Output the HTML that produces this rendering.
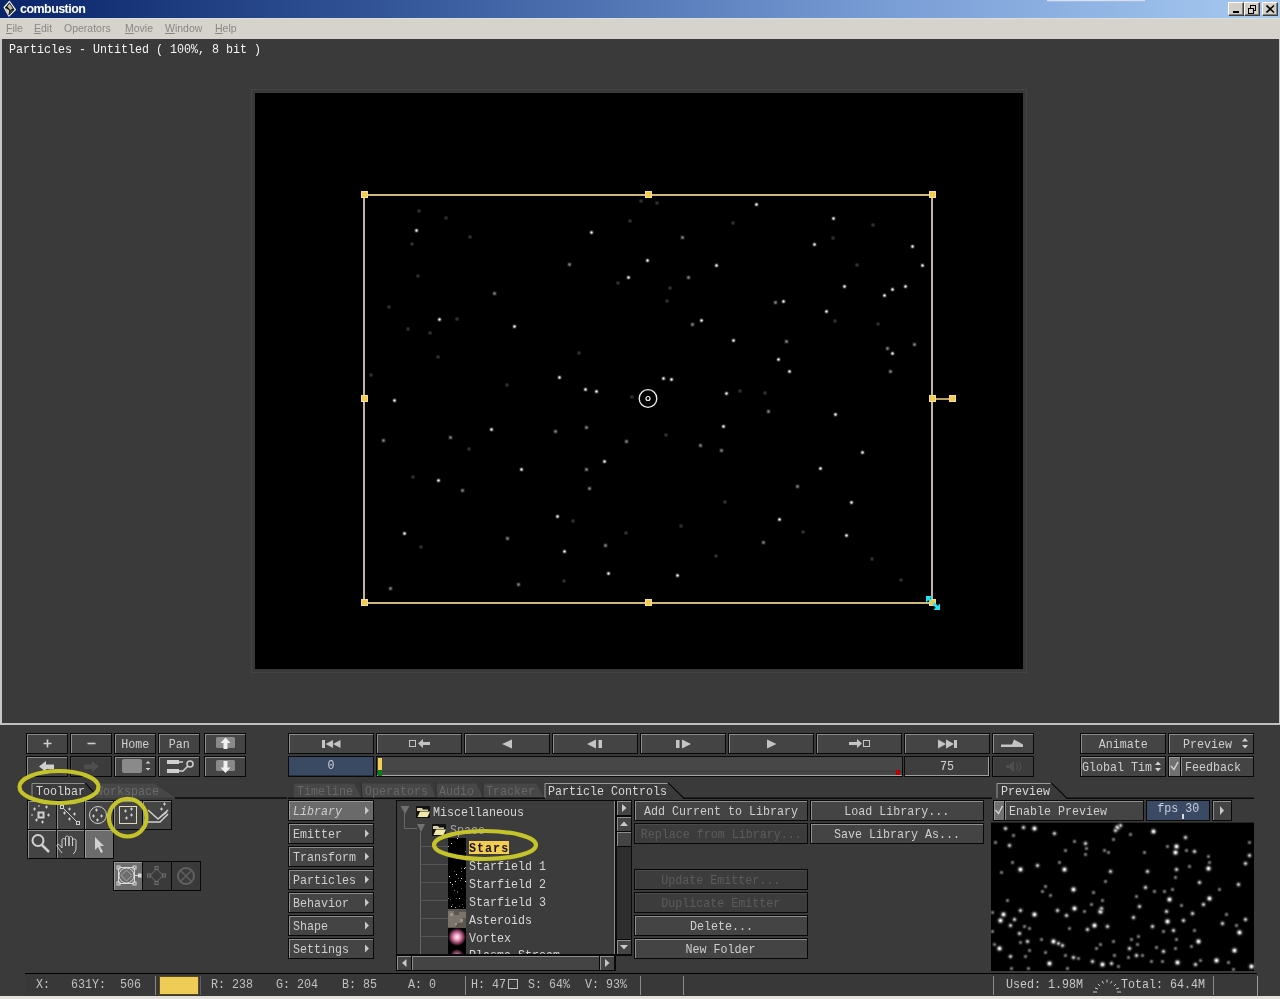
<!DOCTYPE html>
<html><head><meta charset="utf-8">
<style>
*{margin:0;padding:0;box-sizing:border-box}
html,body{width:1280px;height:999px;overflow:hidden;background:#3a3a3a;position:relative;font-family:"Liberation Mono",monospace;-webkit-font-smoothing:antialiased}
body{will-change:transform}
.a{position:absolute}
#title{left:0;top:0;width:1280px;height:18px;background:linear-gradient(to right,#0a246a 0%,#3a5ea0 35%,#7a9ed6 70%,#a6caf0 100%)}
#title .ttl{left:20px;top:1px;font:bold 12.5px/17px "Liberation Sans",sans-serif;color:#fff;letter-spacing:-0.55px}
.wb{top:2px;width:16px;height:14px;background:#d4d0c8;border-top:1px solid #fff;border-left:1px solid #fff;border-right:1px solid #404040;border-bottom:1px solid #404040;box-shadow:inset -1px -1px 0 #808080}
#menu{left:0;top:18px;width:1280px;height:21px;background:#d6d2cc;border-top:1px solid #dedede}
#menu span{position:absolute;top:2px;font:10.5px/14px "Liberation Sans",sans-serif;color:#8a8784}
#menu span u{text-decoration:underline}
#vp{left:0;top:39px;width:1280px;height:686px;background:#3a3a3a;border-left:2px solid #c8c8c8;border-right:1px solid #c8c8c8;border-bottom:2px solid #c0c0c0}
#vptitle{left:9px;top:42px;font:13.5px/16px "Liberation Mono",monospace;color:#f4f4f4}
#canvas{left:255px;top:93px;width:768px;height:576px;background:#000;box-shadow:0 0 0 3px #393939,0 0 0 4px #444}
.bb{background:#d8b870}
.hd{width:7px;height:7px;background:#f2cc55;box-shadow:inset 0 0 0 1px #f6e08a}
i{position:absolute;display:block}
.sb{width:5px;height:5px;margin:-1px 0 0 -1px;background:radial-gradient(circle,#f0f0f0 0,#cfcfcf 22%,rgba(140,140,140,.5) 45%,rgba(80,80,80,.2) 70%,transparent 100%)}
.sm{width:5px;height:5px;margin:-1px 0 0 -1px;background:radial-gradient(circle,#8a8a8a 0,#5a5a5a 30%,rgba(60,60,60,.4) 60%,transparent 100%)}
.sd{width:4px;height:4px;margin:-1px 0 0 -1px;background:radial-gradient(circle,#3c3c3c 0,#262626 40%,transparent 100%)}
.pb{width:9px;height:9px;background:radial-gradient(circle,#fff 0,#e8e8e8 12%,#8a8a8a 28%,rgba(90,90,90,.35) 50%,transparent 75%)}
.pm{width:7px;height:7px;background:radial-gradient(circle,#d0d0d0 0,#888 22%,rgba(80,80,80,.4) 50%,transparent 80%)}
.ps{width:5px;height:5px;background:radial-gradient(circle,#7a7a7a 0,#4a4a4a 35%,rgba(60,60,60,.3) 65%,transparent 100%)}
/* buttons */
.btn{position:absolute;background:#424242;border:1px solid #0c0c0c;box-shadow:inset 1px 1px 0 #8a8a8a, inset -1px -1px 0 #2e2e2e;color:#d6d6d6;font:12.5px/19px "Liberation Mono",monospace;letter-spacing:-0.5px;text-align:center;white-space:nowrap;overflow:hidden}
.btn.dis{color:#5e5e5e}
.sunk{position:absolute;background:#3c3c3c;border-top:1px solid #1a1a1a;border-left:1px solid #1a1a1a;border-bottom:1px solid #a0a0a0;border-right:1px solid #a0a0a0;color:#d6d6d6;font:12.5px/17px "Liberation Mono",monospace;text-align:center}
.tab{position:absolute;height:15px;font:12.5px/15px "Liberation Mono",monospace;letter-spacing:-0.5px;color:#6e6e6e}
.ell{position:absolute;border:4px solid #b9b92a;border-radius:50%}
.txt{position:absolute;font:12.5px/16px "Liberation Mono",monospace;letter-spacing:-0.5px;color:#d8d8d8;white-space:nowrap}

.b{position:absolute;display:flex;justify-content:center;align-items:flex-start;background:#444;border:1px solid #080808;box-shadow:inset 1px 1px 0 #8e8e8e;color:#cecece;font:13.5px/21px "Liberation Mono",monospace;text-align:center;white-space:nowrap;overflow:hidden}
.b.d{background:#3c3c3c;box-shadow:inset 1px 1px 0 #4a4a4a;color:#5c5c5c}
.b.on{background:#6a6a6a;box-shadow:inset 1px 1px 0 #9a9a9a}
.b svg{position:absolute;left:0;top:0}
.tb{position:absolute;font:13.5px/15px "Liberation Mono",monospace;white-space:nowrap}
.t{display:inline-block;transform:scaleX(.864)}
.tl{display:inline-block;transform:scaleX(.864);transform-origin:0 50%}
.ln{position:absolute;background:#0a0a0a}
</style></head><body>
<!-- title bar -->
<div id="title" class="a">
  <svg class="a" style="left:0;top:0" width="20" height="18" viewBox="0 0 20 18"><path d="M9.5 0.6 L16.2 9.8 L8.8 17 L3.4 7.2 Z" fill="#fff"/><path d="M9.5 2.2 L14.6 9.8 L8.8 15.5 L5 7.5 Z" fill="#0a0a0a"/><path d="M9.5 3.5 L12.8 8.5 L10.2 10 L7.2 6.6 Z" fill="#b8b4ac"/><path d="M6 8.2 L9.2 10.2 L8.8 14.6 L6.4 12.2 Z" fill="#d8d0bc"/><path d="M10.4 10.6 L13.6 10 L9.6 14.2 Z" fill="#3c5a3a"/></svg>
  <div class="a ttl">combustion</div>
  <div class="a" style="left:1047px;top:0;width:98px;height:1px;background:#d8e0ff"></div><div class="a" style="left:1047px;top:1px;width:98px;height:1px;background:#a8b8e8"></div>
  <div class="a wb" style="left:1228px"><div class="a" style="left:4px;top:8px;width:6px;height:2px;background:#000"></div></div>
  <div class="a wb" style="left:1244px"><svg class="a" style="left:2px;top:1px" width="10" height="10"><rect x="3.5" y="1.5" width="5" height="5" fill="none" stroke="#000" stroke-width="1"/><rect x="3" y="1" width="6" height="1" fill="#000"/><rect x="1.5" y="4.5" width="5" height="5" fill="#d4d0c8" stroke="#000" stroke-width="1"/><rect x="1" y="4" width="6" height="1" fill="#000"/></svg></div>
  <div class="a wb" style="left:1262px"><svg class="a" style="left:3px;top:2px" width="9" height="8"><path d="M0.5 0.5 L8 7.5 M8 0.5 L0.5 7.5" stroke="#000" stroke-width="1.6"/></svg></div>
</div>
<!-- menu -->
<div id="menu" class="a">
  <span style="left:6px"><u>F</u>ile</span>
  <span style="left:34px"><u>E</u>dit</span>
  <span style="left:64px">Operators</span>
  <span style="left:125px"><u>M</u>ovie</span>
  <span style="left:165px"><u>W</u>indow</span>
  <span style="left:215px"><u>H</u>elp</span>
</div>
<!-- viewport -->
<div id="vp" class="a"></div>
<div id="vptitle" class="a"><span class="tl">Particles - Untitled ( 100%, 8 bit )</span></div>
<div id="canvas" class="a"></div>
<div id="stars"><i class="sb" style="left:415px;top:229px"></i>
<i class="sb" style="left:590px;top:231px"></i>
<i class="sb" style="left:646px;top:259px"></i>
<i class="sb" style="left:627px;top:276px"></i>
<i class="sb" style="left:438px;top:318px"></i>
<i class="sb" style="left:513px;top:325px"></i>
<i class="sb" style="left:558px;top:376px"></i>
<i class="sb" style="left:584px;top:388px"></i>
<i class="sb" style="left:595px;top:390px"></i>
<i class="sb" style="left:755px;top:203px"></i>
<i class="sb" style="left:832px;top:217px"></i>
<i class="sb" style="left:813px;top:243px"></i>
<i class="sb" style="left:911px;top:245px"></i>
<i class="sb" style="left:715px;top:264px"></i>
<i class="sb" style="left:921px;top:264px"></i>
<i class="sb" style="left:843px;top:285px"></i>
<i class="sb" style="left:891px;top:288px"></i>
<i class="sb" style="left:904px;top:285px"></i>
<i class="sb" style="left:883px;top:294px"></i>
<i class="sb" style="left:782px;top:300px"></i>
<i class="sb" style="left:825px;top:310px"></i>
<i class="sb" style="left:700px;top:319px"></i>
<i class="sb" style="left:732px;top:339px"></i>
<i class="sb" style="left:891px;top:352px"></i>
<i class="sb" style="left:777px;top:358px"></i>
<i class="sb" style="left:788px;top:370px"></i>
<i class="sb" style="left:662px;top:377px"></i>
<i class="sb" style="left:670px;top:378px"></i>
<i class="sb" style="left:725px;top:392px"></i>
<i class="sb" style="left:393px;top:399px"></i>
<i class="sb" style="left:490px;top:428px"></i>
<i class="sb" style="left:520px;top:468px"></i>
<i class="sb" style="left:603px;top:460px"></i>
<i class="sb" style="left:556px;top:515px"></i>
<i class="sb" style="left:403px;top:532px"></i>
<i class="sb" style="left:563px;top:550px"></i>
<i class="sb" style="left:607px;top:572px"></i>
<i class="sb" style="left:437px;top:479px"></i>
<i class="sb" style="left:834px;top:413px"></i>
<i class="sb" style="left:722px;top:425px"></i>
<i class="sb" style="left:861px;top:451px"></i>
<i class="sb" style="left:819px;top:467px"></i>
<i class="sb" style="left:850px;top:501px"></i>
<i class="sb" style="left:778px;top:518px"></i>
<i class="sb" style="left:845px;top:534px"></i>
<i class="sb" style="left:676px;top:574px"></i>
<i class="sm" style="left:568px;top:263px"></i>
<i class="sm" style="left:493px;top:292px"></i>
<i class="sm" style="left:382px;top:439px"></i>
<i class="sm" style="left:449px;top:436px"></i>
<i class="sm" style="left:585px;top:426px"></i>
<i class="sm" style="left:554px;top:430px"></i>
<i class="sm" style="left:625px;top:440px"></i>
<i class="sm" style="left:585px;top:468px"></i>
<i class="sm" style="left:588px;top:487px"></i>
<i class="sm" style="left:461px;top:489px"></i>
<i class="sm" style="left:506px;top:537px"></i>
<i class="sm" style="left:604px;top:544px"></i>
<i class="sm" style="left:517px;top:583px"></i>
<i class="sm" style="left:389px;top:587px"></i>
<i class="sm" style="left:767px;top:410px"></i>
<i class="sm" style="left:699px;top:444px"></i>
<i class="sm" style="left:720px;top:449px"></i>
<i class="sm" style="left:796px;top:485px"></i>
<i class="sm" style="left:762px;top:541px"></i>
<i class="sm" style="left:681px;top:236px"></i>
<i class="sm" style="left:687px;top:276px"></i>
<i class="sm" style="left:785px;top:340px"></i>
<i class="sm" style="left:886px;top:347px"></i>
<i class="sm" style="left:774px;top:301px"></i>
<i class="sm" style="left:691px;top:323px"></i>
<i class="sm" style="left:889px;top:370px"></i>
<i class="sm" style="left:913px;top:343px"></i>
<i class="sd" style="left:388px;top:306px"></i>
<i class="sd" style="left:417px;top:275px"></i>
<i class="sd" style="left:411px;top:243px"></i>
<i class="sd" style="left:418px;top:210px"></i>
<i class="sd" style="left:445px;top:217px"></i>
<i class="sd" style="left:469px;top:236px"></i>
<i class="sd" style="left:629px;top:220px"></i>
<i class="sd" style="left:640px;top:200px"></i>
<i class="sd" style="left:370px;top:374px"></i>
<i class="sd" style="left:437px;top:356px"></i>
<i class="sd" style="left:456px;top:318px"></i>
<i class="sd" style="left:429px;top:332px"></i>
<i class="sd" style="left:407px;top:328px"></i>
<i class="sd" style="left:578px;top:352px"></i>
<i class="sd" style="left:506px;top:384px"></i>
<i class="sd" style="left:631px;top:396px"></i>
<i class="sd" style="left:617px;top:282px"></i>
<i class="sd" style="left:669px;top:287px"></i>
<i class="sd" style="left:666px;top:300px"></i>
<i class="sd" style="left:656px;top:202px"></i>
<i class="sd" style="left:732px;top:222px"></i>
<i class="sd" style="left:877px;top:323px"></i>
<i class="sd" style="left:834px;top:320px"></i>
<i class="sd" style="left:764px;top:392px"></i>
<i class="sd" style="left:739px;top:390px"></i>
<i class="sd" style="left:832px;top:237px"></i>
<i class="sd" style="left:872px;top:224px"></i>
<i class="sd" style="left:856px;top:264px"></i>
<i class="sd" style="left:412px;top:476px"></i>
<i class="sd" style="left:468px;top:448px"></i>
<i class="sd" style="left:420px;top:546px"></i>
<i class="sd" style="left:572px;top:520px"></i>
<i class="sd" style="left:625px;top:532px"></i>
<i class="sd" style="left:563px;top:580px"></i>
<i class="sd" style="left:802px;top:531px"></i>
<i class="sd" style="left:680px;top:525px"></i>
<i class="sd" style="left:871px;top:558px"></i>
<i class="sd" style="left:900px;top:579px"></i>
<i class="sd" style="left:724px;top:501px"></i>
<i class="sd" style="left:665px;top:434px"></i>
<i class="sd" style="left:715px;top:555px"></i></div>
<!-- BBOX -->
<div class="a bb" style="left:363px;top:194px;width:570px;height:2px;background:#cdb880"></div>
<div class="a bb" style="left:363px;top:602px;width:570px;height:2px;background:#cdb880"></div>
<div class="a bb" style="left:363px;top:194px;width:2px;height:410px;background:#c4b496"></div>
<div class="a bb" style="left:931px;top:194px;width:2px;height:410px;background:#c4b496"></div>
<div class="a" style="left:933px;top:398px;width:18px;height:2px;background:#b8a060"></div>
<div class="a hd" style="left:361px;top:191px"></div>
<div class="a hd" style="left:645px;top:191px"></div>
<div class="a hd" style="left:929px;top:191px"></div>
<div class="a hd" style="left:361px;top:395px"></div>
<div class="a hd" style="left:929px;top:395px"></div>
<div class="a hd" style="left:949px;top:395px"></div>
<div class="a hd" style="left:361px;top:599px"></div>
<div class="a hd" style="left:645px;top:599px"></div>
<div class="a hd" style="left:929px;top:599px"></div>
<svg class="a" style="left:924px;top:594px" width="18" height="18" viewBox="0 0 18 18"><path d="M2 2 L8.5 2 L6.3 4.2 L13.8 11.7 L16 9.5 L16 16 L9.5 16 L11.7 13.8 L4.2 6.3 L2 8.5 Z" fill="#20e4f0"/><rect x="6" y="6" width="4" height="4" fill="#e8cc60" opacity="0.85"/></svg>
<svg class="a" style="left:637px;top:388px" width="22" height="22" viewBox="0 0 22 22"><circle cx="11" cy="10.5" r="8.8" fill="none" stroke="#f0f0f0" stroke-width="1.3"/><circle cx="11" cy="10.5" r="2" fill="none" stroke="#f0f0f0" stroke-width="1.2"/></svg>
<!-- BOTTOM -->
<div id="bottom"></div>
<!-- left toolbar buttons -->
<div class="b" style="left:26px;top:733px;width:42px;height:21px"><svg width="40" height="19"><path d="M16.5 9.5 h8 M20.5 5.5 v8" stroke="#cfcfcf" stroke-width="1.6"/></svg></div>
<div class="b" style="left:70px;top:733px;width:42px;height:21px"><svg width="40" height="19"><path d="M16.5 9.5 h8" stroke="#cfcfcf" stroke-width="1.6"/></svg></div>
<div class="b" style="left:114px;top:733px;width:42px;height:21px"><span class="t">Home</span></div>
<div class="b" style="left:158px;top:733px;width:42px;height:21px"><span class="t">Pan</span></div>
<div class="b" style="left:204px;top:733px;width:42px;height:21px"><svg width="40" height="19"><rect x="11" y="3" width="19" height="11" rx="1.5" fill="#8a8a8a"/><path d="M20.5 3.5 L15.5 9 H18.5 V15 H22.5 V9 H25.5 Z" fill="#f0f0f0"/></svg></div>
<div class="b" style="left:26px;top:756px;width:42px;height:21px"><svg width="40" height="19"><path d="M12 9.5 L19 4 V7.5 H27 V12 H19 V15 Z" fill="#cfcfcf"/></svg></div>
<div class="b d" style="left:70px;top:756px;width:42px;height:21px"><svg width="40" height="19"><path d="M28 9.5 L21 4 V7.5 H13 V12 H21 V15 Z" fill="#4e4e4e"/></svg></div>
<div class="b" style="left:114px;top:756px;width:42px;height:21px"><svg width="40" height="19"><rect x="7" y="2" width="20" height="14" rx="2" fill="#8a8a8a"/><path d="M30.5 6.5 L33 4 L35.5 6.5 Z M30.5 11 L33 13.5 L35.5 11 Z" fill="#d0d0d0"/></svg></div>
<div class="b" style="left:158px;top:756px;width:42px;height:21px"><svg width="40" height="19"><rect x="8" y="3" width="12" height="4" fill="#d0d0d0"/><rect x="8" y="12" width="12" height="4" fill="#d0d0d0"/><path d="M20 5 h4 M20 14 h4 L29 9" stroke="#d0d0d0" fill="none" stroke-width="1.5"/><circle cx="31" cy="7" r="3" fill="none" stroke="#d0d0d0" stroke-width="1.5"/></svg></div>
<div class="b" style="left:204px;top:756px;width:42px;height:21px"><svg width="40" height="19"><rect x="11" y="3" width="19" height="11" rx="1.5" fill="#8a8a8a"/><path d="M20.5 16 L15.5 10.5 H18.5 V4 H22.5 V10.5 H25.5 Z" fill="#f0f0f0"/></svg></div>

<!-- toolbar tabs -->
<svg class="a" style="left:28px;top:782px" width="262" height="18"><path d="M4 16 V1.5 H57 L70 15.5" fill="#3a3a3a" stroke="#8e8e8e" stroke-width="1"/><path d="M57 1 L71 16" stroke="#0a0a0a" stroke-width="1.5"/><path d="M68 16 V1.5 H126 L147 15.5 Z" fill="#474747"/><path d="M147 16 H259" stroke="#0a0a0a" stroke-width="1.5"/></svg>
<div class="tb" style="left:36px;top:784px;color:#d8d8d8"><span class="tl">Toolbar</span></div>
<div class="tb" style="left:96px;top:784px;color:#6a6a6a"><span class="tl">Workspace</span></div>


<!-- transport row1 -->
<div class="b" style="left:288px;top:733px;width:86px;height:21px"><svg width="84" height="19"><rect x="33" y="6" width="3" height="8" fill="#c4c4c4"/><path d="M36.5 10 L44 6 V14 Z M44 10 L51.5 6 V14 Z" fill="#c4c4c4"/></svg></div>
<div class="b" style="left:376px;top:733px;width:86px;height:21px"><svg width="84" height="19"><rect x="32.5" y="6.5" width="6" height="6" fill="none" stroke="#c4c4c4"/><path d="M41 9.5 L46 5 V8 H53 V11 H46 V14 Z" fill="#c4c4c4"/></svg></div>
<div class="b" style="left:464px;top:733px;width:86px;height:21px"><svg width="84" height="19"><path d="M37 10 L47 5.5 V14.5 Z" fill="#c4c4c4"/></svg></div>
<div class="b" style="left:552px;top:733px;width:86px;height:21px"><svg width="84" height="19"><path d="M34 10 L43 5.5 V14.5 Z" fill="#c4c4c4"/><rect x="45.5" y="6" width="3.5" height="8" fill="#c4c4c4"/></svg></div>
<div class="b" style="left:640px;top:733px;width:86px;height:21px"><svg width="84" height="19"><rect x="35" y="6" width="3.5" height="8" fill="#c4c4c4"/><path d="M41 5.5 L50 10 L41 14.5 Z" fill="#c4c4c4"/></svg></div>
<div class="b" style="left:728px;top:733px;width:86px;height:21px"><svg width="84" height="19"><path d="M38 5.5 L47.5 10 L38 14.5 Z" fill="#c4c4c4"/></svg></div>
<div class="b" style="left:816px;top:733px;width:86px;height:21px"><svg width="84" height="19"><path d="M45 9.5 L40 5 V8 H32 V11 H40 V14 Z" fill="#c4c4c4"/><rect x="46.5" y="6.5" width="6" height="6" fill="none" stroke="#c4c4c4"/></svg></div>
<div class="b" style="left:904px;top:733px;width:86px;height:21px"><svg width="84" height="19"><path d="M33 5.5 L41 10 L33 14.5 Z M41 5.5 L49 10 L41 14.5 Z" fill="#c4c4c4"/><rect x="49" y="6" width="3" height="8" fill="#c4c4c4"/></svg></div>
<div class="b" style="left:992px;top:733px;width:42px;height:21px"><svg width="40" height="19"><path d="M8 10.5 H30 V13 H8 Z M19 10.5 L21 5.5 L30 10.5 Z" fill="#c4c4c4"/></svg></div>
<!-- transport row2 -->
<div class="a" style="left:288px;top:756px;width:86px;height:21px;background:#0a0a0a"></div>
<div class="a" style="left:289px;top:757px;width:84px;height:19px;background:#3a4a62;box-shadow:inset 0 -1px 0 #24303f"></div>
<div class="tb" style="left:288px;top:757px;width:86px;text-align:center;color:#c8d0dc;line-height:17px"><span class="t">0</span></div>
<div class="a" style="left:376px;top:756px;width:527px;height:21px;background:#0a0a0a"></div>
<div class="a" style="left:377px;top:757px;width:525px;height:19px;background:#474747;border-bottom:1px solid #a8a8a8"></div>
<div class="a" style="left:377px;top:771px;width:525px;height:1px;background:#3c3c3c"></div>
<div class="a" style="left:378px;top:758px;width:4px;height:12px;background:#f4d050"></div>
<div class="a" style="left:378px;top:770px;width:4px;height:6px;background:#0e7a1e"></div>
<div class="a" style="left:896px;top:770px;width:4px;height:5px;background:#c00000"></div>
<div class="a" style="left:904px;top:756px;width:86px;height:21px;background:#3e3e3e;border:1px solid #0a0a0a;box-shadow:inset -1px -1px 0 #a0a0a0"></div>
<div class="tb" style="left:904px;top:759px;width:86px;text-align:center;color:#d0d0d0"><span class="t">75</span></div>
<div class="b d" style="left:992px;top:756px;width:42px;height:21px"><svg width="40" height="19"><path d="M13 8 H16 L21 4 V15 L16 11 H13 Z" fill="#4e4e4e"/><path d="M23 6 Q26 9.5 23 13 M25.5 4.5 Q30 9.5 25.5 14.5" stroke="#4e4e4e" fill="none" stroke-width="1.3"/></svg></div>
<!-- right group -->
<div class="b" style="left:1080px;top:733px;width:86px;height:21px"><span class="t">Animate</span></div>
<div class="b" style="left:1168px;top:733px;width:86px;height:21px;text-align:left;justify-content:flex-start;padding-left:14px"><span class="tl">Preview</span><svg width="84" height="19"><path d="M73 7.5 L76 4 L79 7.5 Z M73 11 L76 14.5 L79 11 Z" fill="#d0d0d0"/></svg></div>
<div class="b" style="left:1080px;top:756px;width:86px;height:21px;text-align:left;justify-content:flex-start;padding-left:1px"><span class="tl">Global Time</span><div class="a" style="left:71px;top:1px;width:13px;height:18px;background:#444"></div><svg width="84" height="19"><path d="M74 8 L77 4.5 L80 8 Z M74 11 L77 14.5 L80 11 Z" fill="#d0d0d0"/></svg></div>
<div class="b" style="left:1168px;top:756px;width:13px;height:21px;background:#707070;box-shadow:inset 1px 1px 0 #9a9a9a"><svg width="11" height="19"><path d="M2 9 L5 12.5 L9 5" stroke="#d0d0d0" fill="none" stroke-width="1.5"/></svg></div>
<div class="b" style="left:1180px;top:756px;width:74px;height:21px;text-align:left;justify-content:flex-start;padding-left:4px"><span class="tl">Feedback</span></div>

<!-- panel tabs -->
<svg class="a" style="left:286px;top:782px" width="710" height="18">
 <path d="M8 16 V1.5 H68 L75 15.5 Z" fill="#474747"/>
 <path d="M76 16 V1.5 H144 L150 15.5 Z" fill="#474747"/>
 <path d="M150 16 V1.5 H190 L197 15.5 Z" fill="#474747"/>
 <path d="M197 16 V1.5 H250 L258 15.5 Z" fill="#474747"/>
 <path d="M75 1 L76 16 M150 1 V16 M197 1 V16" stroke="#2c2c2c" stroke-width="1"/>
 <path d="M259 16 V1.5 H382 L397 16" fill="#3a3a3a" stroke="#9a9a9a" stroke-width="1"/>
 <path d="M382 1 L397.5 16" stroke="#0a0a0a" stroke-width="1.5"/>
 <path d="M2 16.3 H259 M397 16.3 H706" stroke="#0a0a0a" stroke-width="1.5"/>
</svg>
<div class="tb" style="left:297px;top:784px;color:#676767"><span class="tl">Timeline</span></div>
<div class="tb" style="left:365px;top:784px;color:#676767"><span class="tl">Operators</span></div>
<div class="tb" style="left:439px;top:784px;color:#676767"><span class="tl">Audio</span></div>
<div class="tb" style="left:486px;top:784px;color:#676767"><span class="tl">Tracker</span></div>
<div class="tb" style="left:548px;top:784px;color:#d8d8d8"><span class="tl">Particle Controls</span></div>
<svg class="a" style="left:995px;top:782px" width="262" height="18">
 <path d="M2 16 V1.5 H56 L71 16" fill="#3a3a3a" stroke="#9a9a9a" stroke-width="1"/>
 <path d="M56 1 L71.5 16" stroke="#0a0a0a" stroke-width="1.5"/>
 <path d="M71 16.3 H259" stroke="#0a0a0a" stroke-width="1.5"/>
</svg>
<div class="tb" style="left:1001px;top:784px;color:#d8d8d8"><span class="tl">Preview</span></div>
<!-- particle controls left -->
<div class="b on" style="left:288px;top:800px;width:86px;height:21px;text-align:left;justify-content:flex-start;padding-left:4px;font-style:italic"><span class="tl">Library</span><svg width="84" height="19" style="left:0;top:0"><path d="M76 5.5 L80 9.5 L76 13.5 Z" fill="#c8c8c8"/></svg></div>
<div class="b" style="left:288px;top:823px;width:86px;height:21px;text-align:left;justify-content:flex-start;padding-left:4px"><span class="tl">Emitter</span><svg width="84" height="19" style="left:0;top:0"><path d="M76 5.5 L80 9.5 L76 13.5 Z" fill="#c8c8c8"/></svg></div>
<div class="b" style="left:288px;top:846px;width:86px;height:21px;text-align:left;justify-content:flex-start;padding-left:4px"><span class="tl">Transform</span><svg width="84" height="19" style="left:0;top:0"><path d="M76 5.5 L80 9.5 L76 13.5 Z" fill="#c8c8c8"/></svg></div>
<div class="b" style="left:288px;top:869px;width:86px;height:21px;text-align:left;justify-content:flex-start;padding-left:4px"><span class="tl">Particles</span><svg width="84" height="19" style="left:0;top:0"><path d="M76 5.5 L80 9.5 L76 13.5 Z" fill="#c8c8c8"/></svg></div>
<div class="b" style="left:288px;top:892px;width:86px;height:21px;text-align:left;justify-content:flex-start;padding-left:4px"><span class="tl">Behavior</span><svg width="84" height="19" style="left:0;top:0"><path d="M76 5.5 L80 9.5 L76 13.5 Z" fill="#c8c8c8"/></svg></div>
<div class="b" style="left:288px;top:915px;width:86px;height:21px;text-align:left;justify-content:flex-start;padding-left:4px"><span class="tl">Shape</span><svg width="84" height="19" style="left:0;top:0"><path d="M76 5.5 L80 9.5 L76 13.5 Z" fill="#c8c8c8"/></svg></div>
<div class="b" style="left:288px;top:938px;width:86px;height:21px;text-align:left;justify-content:flex-start;padding-left:4px"><span class="tl">Settings</span><svg width="84" height="19" style="left:0;top:0"><path d="M76 5.5 L80 9.5 L76 13.5 Z" fill="#c8c8c8"/></svg></div>
<!-- tree -->
<div class="a" style="left:396px;top:800px;width:236px;height:156px;background:#0a0a0a"></div>
<div class="a" style="left:397px;top:801px;width:218px;height:153px;background:#3c3c3c;border-right:1px solid #8c8c8c"></div>
<svg class="a" style="left:397px;top:801px" width="218" height="153">
 <path d="M7.5 12 V27.5 H20 M23.5 31 V153" stroke="#666" stroke-width="1" fill="none"/>
 <path d="M24 45.5 H51 M24 63.5 H51 M24 81.5 H51 M24 99.5 H51 M24 117.5 H51 M24 135.5 H51" stroke="#555" stroke-width="1"/>
 <path d="M3.5 5 H12.5 L8 13 Z" fill="#707070"/>
 <path d="M20 23 H28 L24 31 Z" fill="#707070"/>
 <g transform="translate(-1 1)">
  <rect x="20" y="4" width="14" height="12" fill="#111"/><path d="M21 6 H26 L27 7.5 H32 V9 H21 Z" fill="#d8d0a0"/><path d="M21.5 15 L24 9.5 H34 L31.5 15 Z" fill="#f0e8a8"/>
 </g>
 <g transform="translate(15 19)">
  <rect x="20" y="4" width="14" height="12" fill="#111"/><path d="M21 6 H26 L27 7.5 H32 V9 H21 Z" fill="#d8d0a0"/><path d="M21.5 15 L24 9.5 H34 L31.5 15 Z" fill="#f0e8a8"/>
 </g>
 <rect x="51" y="37" width="18" height="116" fill="#000"/>
 <g fill="#ccc"><rect x="58" y="106" width="1" height="1" fill="#aaa"/><rect x="62" y="97" width="1" height="1" fill="#eee"/><rect x="51" y="97" width="1" height="1" fill="#777"/><rect x="68" y="66" width="1" height="1" fill="#aaa"/><rect x="66" y="106" width="1" height="1" fill="#555"/><rect x="63" y="56" width="1" height="1" fill="#aaa"/><rect x="55" y="103" width="1" height="1" fill="#555"/><rect x="51" y="45" width="1" height="1" fill="#aaa"/><rect x="52" y="75" width="1" height="1" fill="#eee"/><rect x="59" y="97" width="1" height="1" fill="#555"/><rect x="64" y="87" width="1" height="1" fill="#555"/><rect x="55" y="83" width="1" height="1" fill="#eee"/><rect x="52" y="54" width="1" height="1" fill="#555"/><rect x="57" y="70" width="1" height="1" fill="#555"/><rect x="60" y="90" width="1" height="1" fill="#555"/><rect x="62" y="105" width="1" height="1" fill="#555"/><rect x="58" y="80" width="1" height="1" fill="#eee"/><rect x="59" y="57" width="1" height="1" fill="#777"/><rect x="68" y="50" width="1" height="1" fill="#aaa"/><rect x="59" y="73" width="1" height="1" fill="#eee"/><rect x="53" y="98" width="1" height="1" fill="#555"/><rect x="53" y="81" width="1" height="1" fill="#eee"/><rect x="64" y="56" width="1" height="1" fill="#eee"/><rect x="60" y="91" width="1" height="1" fill="#555"/><rect x="54" y="42" width="1" height="1" fill="#eee"/><rect x="63" y="79" width="1" height="1" fill="#777"/><rect x="67" y="67" width="1" height="1" fill="#eee"/><rect x="60" y="37" width="1" height="1" fill="#eee"/><rect x="54" y="105" width="1" height="1" fill="#eee"/><rect x="57" y="89" width="1" height="1" fill="#777"/><rect x="59" y="56" width="1" height="1" fill="#eee"/><rect x="61" y="77" width="1" height="1" fill="#777"/><rect x="55" y="85" width="1" height="1" fill="#555"/><rect x="65" y="103" width="1" height="1" fill="#555"/><rect x="68" y="50" width="1" height="1" fill="#777"/><rect x="64" y="67" width="1" height="1" fill="#777"/><rect x="64" y="70" width="1" height="1" fill="#777"/><rect x="68" y="80" width="1" height="1" fill="#eee"/><rect x="64" y="77" width="1" height="1" fill="#eee"/><rect x="63" y="54" width="1" height="1" fill="#eee"/></g>
 <rect x="51" y="108" width="18" height="19" fill="#5c5650"/>
 <path d="M51 110 h6 v4 h5 v-3 h7 v6 h-4 v5 h-6 v4 h-8 Z" fill="#7a746c"/>
 <path d="M53 112 h3 v3 h-3 Z M63 118 h3 v3 h-3 Z M58 122 h2 v2 h-2Z" fill="#9a948a"/>
 <defs><radialGradient id="vg"><stop offset="0" stop-color="#fff4fa"/><stop offset="0.3" stop-color="#f0a8c8"/><stop offset="0.65" stop-color="#a04870"/><stop offset="1" stop-color="#000"/></radialGradient></defs><circle cx="60" cy="136" r="9" fill="url(#vg)"/><circle cx="60" cy="155" r="7" fill="url(#vg)" opacity="0.7"/>
</svg>
<div class="tb" style="left:433px;top:805px;color:#d6d6d6;line-height:16px"><span class="tl">Miscellaneous</span></div>
<div class="tb" style="left:450px;top:823px;color:#a4a4a4;line-height:16px"><span class="tl">Space</span></div>
<div class="a" style="left:469px;top:841px;width:40px;height:13px;background:#f2cc55"></div>
<div class="tb" style="left:469px;top:841px;color:#1a1408;font-weight:bold;line-height:16px;letter-spacing:1.2px"><span class="tl">Stars</span></div>
<div class="tb" style="left:469px;top:859px;color:#d6d6d6;line-height:16px"><span class="tl">Starfield 1</span></div>
<div class="tb" style="left:469px;top:877px;color:#d6d6d6;line-height:16px"><span class="tl">Starfield 2</span></div>
<div class="tb" style="left:469px;top:895px;color:#d6d6d6;line-height:16px"><span class="tl">Starfield 3</span></div>
<div class="tb" style="left:469px;top:913px;color:#d6d6d6;line-height:16px"><span class="tl">Asteroids</span></div>
<div class="tb" style="left:469px;top:931px;color:#d6d6d6;line-height:16px"><span class="tl">Vortex</span></div>
<div class="a" style="left:397px;top:947px;width:217px;height:7px;overflow:hidden"><div class="tb" style="left:72px;top:1px;color:#d6d6d6;line-height:16px"><span class="tl">Plasma Stream</span></div></div>
<!-- v scrollbar -->
<div class="a" style="left:617px;top:846px;width:14px;height:94px;background:#2e2e2e"></div>
<div class="b" style="left:616px;top:800px;width:16px;height:16px"><svg width="14" height="14"><path d="M5 3 L9.5 7 L5 11 Z" fill="#c8c8c8"/></svg></div>
<div class="b" style="left:616px;top:816px;width:16px;height:16px"><svg width="14" height="14"><path d="M3 9 L7 4.5 L11 9 Z" fill="#c8c8c8"/></svg></div>
<div class="b" style="left:616px;top:831px;width:16px;height:16px"></div>
<div class="b" style="left:616px;top:939px;width:16px;height:16px"><svg width="14" height="14"><path d="M3 5 L7 9.5 L11 5 Z" fill="#c8c8c8"/></svg></div>
<!-- h scrollbar -->
<div class="a" style="left:396px;top:955px;width:220px;height:16px;background:#0a0a0a"></div>
<div class="a" style="left:412px;top:956px;width:188px;height:14px;background:#444;box-shadow:inset 1px 1px 0 #8e8e8e"></div>
<div class="b" style="left:396px;top:955px;width:16px;height:16px"><svg width="14" height="14"><path d="M9.5 3 L5 7 L9.5 11 Z" fill="#c8c8c8"/></svg></div>
<div class="b" style="left:599px;top:955px;width:16px;height:16px"><svg width="14" height="14"><path d="M5 3 L9.5 7 L5 11 Z" fill="#c8c8c8"/></svg></div>
<!-- right buttons -->
<div class="b" style="left:634px;top:800px;width:174px;height:21px"><span class="t">Add Current to Library</span></div>
<div class="b" style="left:810px;top:800px;width:174px;height:21px"><span class="t">Load Library...</span></div>
<div class="b d" style="left:634px;top:823px;width:174px;height:21px"><span class="t">Replace from Library...</span></div>
<div class="b" style="left:810px;top:823px;width:174px;height:21px"><span class="t">Save Library As...</span></div>
<div class="b d" style="left:634px;top:869px;width:174px;height:21px"><span class="t">Update Emitter...</span></div>
<div class="b d" style="left:634px;top:892px;width:174px;height:21px"><span class="t">Duplicate Emitter</span></div>
<div class="b" style="left:634px;top:915px;width:174px;height:21px"><span class="t">Delete...</span></div>
<div class="b" style="left:634px;top:938px;width:174px;height:21px"><span class="t">New Folder</span></div>
<!-- preview panel -->
<div class="b on" style="left:993px;top:800px;width:12px;height:21px;background:#707070"><svg width="10" height="19"><path d="M1.5 9 L4.5 12.5 L8.5 5" stroke="#d0d0d0" fill="none" stroke-width="1.5"/></svg></div>
<div class="b" style="left:1004px;top:800px;width:140px;height:21px;text-align:left;justify-content:flex-start;padding-left:4px"><span class="tl">Enable Preview</span></div>
<div class="a" style="left:1146px;top:800px;width:64px;height:21px;background:#0a0a0a"></div>
<div class="a" style="left:1147px;top:801px;width:62px;height:19px;background:#3a4a64"></div>
<div class="tb" style="left:1146px;top:801px;width:64px;text-align:center;color:#c8d0dc"><span class="t">fps 30</span></div>
<div class="a" style="left:1182px;top:814px;width:2px;height:5px;background:#d8d8d8"></div>
<div class="b" style="left:1212px;top:800px;width:20px;height:21px"><svg width="18" height="19"><path d="M7 5 L11 9.5 L7 14 Z" fill="#c8c8c8"/></svg></div>
<div class="a" style="left:991px;top:822px;width:263px;height:149px;background:#000;border-top:1px solid #222"></div>
<div id="pstars"><i class="pb" style="left:1030px;top:824px"></i>
<i class="pm" style="left:1020px;top:824px"></i>
<i class="pm" style="left:1002px;top:825px"></i>
<i class="pm" style="left:1051px;top:830px"></i>
<i class="ps" style="left:1011px;top:833px"></i>
<i class="pb" style="left:1113px;top:823px"></i>
<i class="pm" style="left:1112px;top:827px"></i>
<i class="ps" style="left:1111px;top:837px"></i>
<i class="pm" style="left:1006px;top:842px"></i>
<i class="ps" style="left:993px;top:840px"></i>
<i class="ps" style="left:1072px;top:839px"></i>
<i class="pm" style="left:1082px;top:840px"></i>
<i class="ps" style="left:1084px;top:846px"></i>
<i class="ps" style="left:1063px;top:848px"></i>
<i class="ps" style="left:1102px;top:848px"></i>
<i class="ps" style="left:1106px;top:850px"></i>
<i class="ps" style="left:1083px;top:852px"></i>
<i class="ps" style="left:1010px;top:860px"></i>
<i class="ps" style="left:1057px;top:860px"></i>
<i class="pm" style="left:1034px;top:862px"></i>
<i class="pb" style="left:1016px;top:865px"></i>
<i class="pb" style="left:1060px;top:865px"></i>
<i class="ps" style="left:999px;top:870px"></i>
<i class="pm" style="left:1107px;top:868px"></i>
<i class="ps" style="left:1103px;top:879px"></i>
<i class="ps" style="left:1043px;top:884px"></i>
<i class="pb" style="left:1069px;top:885px"></i>
<i class="ps" style="left:1040px;top:889px"></i>
<i class="ps" style="left:1048px;top:893px"></i>
<i class="ps" style="left:1091px;top:890px"></i>
<i class="ps" style="left:1005px;top:898px"></i>
<i class="ps" style="left:1100px;top:898px"></i>
<i class="ps" style="left:1089px;top:902px"></i>
<i class="pm" style="left:1017px;top:907px"></i>
<i class="pm" style="left:1054px;top:907px"></i>
<i class="pb" style="left:1070px;top:904px"></i>
<i class="pb" style="left:1096px;top:907px"></i>
<i class="pm" style="left:1098px;top:905px"></i>
<i class="pb" style="left:999px;top:910px"></i>
<i class="pb" style="left:1030px;top:910px"></i>
<i class="pm" style="left:1063px;top:912px"></i>
<i class="ps" style="left:1082px;top:909px"></i>
<i class="pb" style="left:996px;top:916px"></i>
<i class="pm" style="left:1011px;top:916px"></i>
<i class="pm" style="left:1007px;top:922px"></i>
<i class="pb" style="left:1090px;top:921px"></i>
<i class="pm" style="left:1104px;top:923px"></i>
<i class="pm" style="left:1084px;top:926px"></i>
<i class="ps" style="left:1067px;top:926px"></i>
<i class="pm" style="left:1016px;top:930px"></i>
<i class="ps" style="left:1027px;top:926px"></i>
<i class="ps" style="left:1022px;top:924px"></i>
<i class="pb" style="left:1049px;top:937px"></i>
<i class="pm" style="left:1055px;top:940px"></i>
<i class="pm" style="left:1059px;top:942px"></i>
<i class="pm" style="left:1024px;top:938px"></i>
<i class="ps" style="left:1039px;top:937px"></i>
<i class="ps" style="left:1018px;top:940px"></i>
<i class="ps" style="left:992px;top:942px"></i>
<i class="pb" style="left:995px;top:944px"></i>
<i class="ps" style="left:1111px;top:939px"></i>
<i class="ps" style="left:1098px;top:942px"></i>
<i class="ps" style="left:1094px;top:946px"></i>
<i class="ps" style="left:1027px;top:948px"></i>
<i class="ps" style="left:1043px;top:950px"></i>
<i class="pm" style="left:1007px;top:953px"></i>
<i class="ps" style="left:1023px;top:954px"></i>
<i class="ps" style="left:1063px;top:953px"></i>
<i class="pm" style="left:1070px;top:954px"></i>
<i class="ps" style="left:1076px;top:956px"></i>
<i class="pm" style="left:1089px;top:958px"></i>
<i class="ps" style="left:1112px;top:953px"></i>
<i class="pb" style="left:1045px;top:959px"></i>
<i class="pb" style="left:1098px;top:960px"></i>
<i class="pm" style="left:1108px;top:960px"></i>
<i class="ps" style="left:1116px;top:964px"></i>
<i class="ps" style="left:1009px;top:966px"></i>
<i class="ps" style="left:1026px;top:966px"></i>
<i class="ps" style="left:1065px;top:966px"></i>
<i class="ps" style="left:990px;top:929px"></i>
<i class="ps" style="left:990px;top:910px"></i>
<i class="pb" style="left:1149px;top:827px"></i>
<i class="ps" style="left:1128px;top:832px"></i>
<i class="pm" style="left:1182px;top:834px"></i>
<i class="ps" style="left:1165px;top:844px"></i>
<i class="pb" style="left:1172px;top:842px"></i>
<i class="pb" style="left:1171px;top:848px"></i>
<i class="pm" style="left:1191px;top:848px"></i>
<i class="ps" style="left:1142px;top:850px"></i>
<i class="ps" style="left:1184px;top:848px"></i>
<i class="ps" style="left:1206px;top:854px"></i>
<i class="ps" style="left:1207px;top:860px"></i>
<i class="pb" style="left:1204px;top:864px"></i>
<i class="pm" style="left:1246px;top:852px"></i>
<i class="pm" style="left:1242px;top:860px"></i>
<i class="ps" style="left:1247px;top:840px"></i>
<i class="pm" style="left:1144px;top:868px"></i>
<i class="pm" style="left:1173px;top:866px"></i>
<i class="ps" style="left:1187px;top:864px"></i>
<i class="ps" style="left:1173px;top:875px"></i>
<i class="pm" style="left:1196px;top:879px"></i>
<i class="pm" style="left:1235px;top:881px"></i>
<i class="pm" style="left:1142px;top:884px"></i>
<i class="ps" style="left:1152px;top:889px"></i>
<i class="ps" style="left:1170px;top:887px"></i>
<i class="ps" style="left:1162px;top:889px"></i>
<i class="ps" style="left:1217px;top:887px"></i>
<i class="ps" style="left:1134px;top:894px"></i>
<i class="pb" style="left:1165px;top:895px"></i>
<i class="pb" style="left:1205px;top:894px"></i>
<i class="pm" style="left:1200px;top:901px"></i>
<i class="pm" style="left:1136px;top:903px"></i>
<i class="ps" style="left:1179px;top:903px"></i>
<i class="pm" style="left:1163px;top:908px"></i>
<i class="pm" style="left:1189px;top:910px"></i>
<i class="ps" style="left:1224px;top:912px"></i>
<i class="pm" style="left:1242px;top:916px"></i>
<i class="pm" style="left:1130px;top:914px"></i>
<i class="pb" style="left:1163px;top:917px"></i>
<i class="pm" style="left:1180px;top:917px"></i>
<i class="pm" style="left:1219px;top:920px"></i>
<i class="ps" style="left:1234px;top:923px"></i>
<i class="pm" style="left:1149px;top:923px"></i>
<i class="pm" style="left:1170px;top:927px"></i>
<i class="ps" style="left:1161px;top:929px"></i>
<i class="ps" style="left:1192px;top:928px"></i>
<i class="pb" style="left:1235px;top:928px"></i>
<i class="ps" style="left:1136px;top:934px"></i>
<i class="ps" style="left:1129px;top:937px"></i>
<i class="ps" style="left:1174px;top:937px"></i>
<i class="pb" style="left:1194px;top:937px"></i>
<i class="ps" style="left:1189px;top:944px"></i>
<i class="ps" style="left:1135px;top:942px"></i>
<i class="pm" style="left:1126px;top:945px"></i>
<i class="ps" style="left:1154px;top:945px"></i>
<i class="ps" style="left:1173px;top:946px"></i>
<i class="pm" style="left:1160px;top:948px"></i>
<i class="pb" style="left:1230px;top:946px"></i>
<i class="pm" style="left:1133px;top:952px"></i>
<i class="ps" style="left:1140px;top:953px"></i>
<i class="ps" style="left:1126px;top:955px"></i>
<i class="ps" style="left:1149px;top:959px"></i>
<i class="ps" style="left:1160px;top:959px"></i>
<i class="pb" style="left:1173px;top:958px"></i>
<i class="pm" style="left:1192px;top:961px"></i>
<i class="ps" style="left:1198px;top:958px"></i>
<i class="pb" style="left:1212px;top:956px"></i>
<i class="ps" style="left:1226px;top:960px"></i>
<i class="pb" style="left:1247px;top:962px"></i>
<i class="ps" style="left:1231px;top:967px"></i>
<i class="pm" style="left:1117px;top:822px"></i></div>
<!-- status bar -->
<div class="a" style="left:25px;top:973px;width:1232px;height:1px;background:#000"></div>
<div class="a" style="left:25px;top:974px;width:1232px;height:22px;background:#383838"></div>
<div class="a" style="left:0;top:996px;width:1280px;height:3px;background:#e4e0dc"></div>
<div class="a" style="left:155px;top:976px;width:1px;height:19px;background:#8a8a8a"></div>
<div class="a" style="left:160px;top:977px;width:38px;height:17px;background:#eecc55;box-shadow:0 0 0 1px #5a4a20"></div>
<div class="a" style="left:200px;top:976px;width:1px;height:19px;background:#5a5a7a"></div>
<div class="a" style="left:465px;top:976px;width:1px;height:19px;background:#8a8a8a"></div>
<div class="a" style="left:640px;top:976px;width:1px;height:19px;background:#8a8a8a"></div>
<div class="a" style="left:683px;top:976px;width:1px;height:19px;background:#8a8a8a"></div>
<div class="a" style="left:993px;top:976px;width:1px;height:19px;background:#8a8a8a"></div>
<div class="a" style="left:1213px;top:976px;width:1px;height:19px;background:#8a8a8a"></div>
<div class="a" style="left:1257px;top:976px;width:1px;height:20px;background:#9a9a9a"></div>
<div class="tb" style="left:36px;top:977px;color:#c0c0c0"><span class="tl">X:</span></div>
<div class="tb" style="left:71px;top:977px;color:#c0c0c0"><span class="tl">631Y:</span></div>
<div class="tb" style="left:120px;top:977px;color:#c0c0c0"><span class="tl">506</span></div>
<div class="tb" style="left:211px;top:977px;color:#c0c0c0"><span class="tl">R: 238</span></div>
<div class="tb" style="left:276px;top:977px;color:#c0c0c0"><span class="tl">G: 204</span></div>
<div class="tb" style="left:342px;top:977px;color:#c0c0c0"><span class="tl">B: 85</span></div>
<div class="tb" style="left:408px;top:977px;color:#c0c0c0"><span class="tl">A: 0</span></div>
<div class="tb" style="left:471px;top:977px;color:#c0c0c0"><span class="tl">H: 47</span></div>
<div class="a" style="left:508px;top:979px;width:10px;height:10px;border:1px solid #c0c0c0"></div>
<div class="tb" style="left:528px;top:977px;color:#c0c0c0"><span class="tl">S: 64%</span></div>
<div class="tb" style="left:585px;top:977px;color:#c0c0c0"><span class="tl">V: 93%</span></div>
<div class="tb" style="left:1006px;top:977px;color:#c8c8c8"><span class="tl">Used: 1.98M</span></div>
<div class="tb" style="left:1121px;top:977px;color:#c8c8c8"><span class="tl">Total: 64.4M</span></div>
<svg class="a" style="left:1090px;top:976px" width="34" height="18"><g stroke="#c8c8c8" stroke-width="1"><path d="M3 16 h4 M5 12 l3 1 M8 8 l2 2 M12 5 l1.5 2.5 M17 3.5 v3 M22 5 l-1.5 2.5 M26 8 l-2 2 M29 12 l-3 1 M27 16 h4"/></g></svg>
<!-- icon grid -->
<div class="a" style="left:27px;top:800px;width:145px;height:30px;background:#0a0a0a"></div>
<div class="a" style="left:27px;top:829px;width:87px;height:30px;background:#0a0a0a"></div>
<div class="a" style="left:113px;top:861px;width:88px;height:30px;background:#0a0a0a"></div>
<div class="b" style="left:27px;top:800px;width:30px;height:30px"></div>
<div class="b" style="left:56px;top:800px;width:29px;height:30px"></div>
<div class="b" style="left:84px;top:800px;width:30px;height:30px"></div>
<div class="b" style="left:113px;top:800px;width:30px;height:30px"></div>
<div class="b" style="left:142px;top:800px;width:30px;height:30px"></div>
<div class="b" style="left:27px;top:829px;width:30px;height:30px"></div>
<div class="b" style="left:56px;top:829px;width:29px;height:30px"></div>
<div class="b on" style="left:84px;top:829px;width:30px;height:30px;background:#6c6c6c"></div>
<div class="b on" style="left:113px;top:861px;width:30px;height:30px;background:#6c6c6c"></div>
<div class="b d" style="left:142px;top:861px;width:30px;height:30px;background:#3a3a3a;box-shadow:none"></div>
<div class="b d" style="left:171px;top:861px;width:30px;height:30px;background:#3a3a3a;box-shadow:none"></div>
<svg class="a" style="left:27px;top:800px" width="175" height="92">
 <g stroke="#d0d0d0" fill="none" stroke-width="1">
  <rect x="11.5" y="12.5" width="5" height="5" stroke-width="2"/>
  <path d="M6 9 h3 M7.5 7.5 v3 M18 7 h3 M19.5 5.5 v3 M20 15 h3 M21.5 13.5 v3 M8 20 h3 M9.5 18.5 v3 M14 22 h3 M15.5 20.5 v3 M11 6 h2 M4 15 h2"/>
  <rect x="33.5" y="5.5" width="3" height="3"/><rect x="49.5" y="21.5" width="3" height="3"/>
  <path d="M36 8 L50 22 M41 9 h3 M42.5 7.5 v3 M36 13 h3 M37.5 11.5 v3 M46 14 h3 M47.5 12.5 v3 M41 19 h3 M42.5 17.5 v3"/>
  <circle cx="71" cy="15" r="8.5"/>
  <path d="M68 10 h3 M69.5 8.5 v3 M65 16 h3 M66.5 14.5 v3 M73 16 h3 M74.5 14.5 v3 M69 20 h3 M70.5 18.5 v3"/>
  <rect x="92.5" y="6.5" width="17" height="17" stroke="#e0d8b8"/>
  <path d="M97 11 h3 M98.5 9.5 v3 M103 9 h3 M104.5 7.5 v3 M103 15 h3 M104.5 13.5 v3 M98 18 h3 M99.5 16.5 v3"/>
  <path d="M121 10 L131 19 L141 10 M121 22 L133 22 L141 14 M131 19 L140 12" stroke-width="1.5"/>
  <path d="M136 4 h3 M137.5 2.5 v3 M133 9 h3 M134.5 7.5 v3"/>
  <circle cx="11" cy="40.5" r="5.5" stroke-width="2"/><path d="M15 45 L22 52" stroke-width="2.5"/>
  <path d="M35 53 C33 50 30 47 30 45.5 C30 44 32 44 33.5 46 L35 48 V40 C35 38 38.5 38 38.5 40 V46 M38.5 46 V37.5 C38.5 35.5 42 35.5 42 37.5 V46 M42 46 V38 C42 36 45.5 36 45.5 38 V46 M45.5 46 V40.5 C45.5 38.5 49 38.5 49 40.5 V48 C49 51 47.5 53 46 54"/>
  <path d="M68 37 V50 L71 47 L74 53 L76 52 L73 46 L77 46 Z" fill="#d0d0d0" stroke="none"/>
  <g stroke="#dadada">
  <rect x="91.5" y="67.5" width="16" height="16" rx="1"/>
  <circle cx="99.5" cy="75.5" r="7.5"/>
  <path d="M99.5 70 L105 75.5 L99.5 81 L94 75.5 Z" stroke="#aaa"/>
  <rect x="90" y="66" width="3" height="3"/><rect x="106" y="66" width="3" height="3"/><rect x="90" y="82" width="3" height="3"/><rect x="106" y="82" width="3" height="3"/>
  <path d="M108 75.5 H112"/><rect x="111.5" y="74" width="2.5" height="3" fill="#dadada"/>
  </g>
  <g stroke="#707070">
  <path d="M129.5 69 L136 75.5 L129.5 82 L123 75.5 Z"/>
  <rect x="128" y="66.5" width="3" height="3"/><rect x="128" y="81.5" width="3" height="3"/><rect x="120.5" y="74" width="3" height="3"/><rect x="135.5" y="74" width="3" height="3"/>
  </g>
  <circle cx="159" cy="76" r="8" stroke="#606060" stroke-width="2"/><path d="M153.5 70.5 L164.5 81.5 M164.5 70.5 L153.5 81.5" stroke="#606060" stroke-width="1.5"/>
 </g>
</svg>

<!-- annotations -->
<svg class="a" style="left:0;top:0;pointer-events:none" width="1280" height="999">
 <g fill="none" stroke="#c4c42a" stroke-width="4.2">
  <ellipse cx="59" cy="787" rx="39.5" ry="16"/>
  <ellipse cx="127.7" cy="817.7" rx="18.8" ry="18.8"/>
  <ellipse cx="485" cy="845" rx="51" ry="14"/>
 </g>
</svg>
</body></html>
